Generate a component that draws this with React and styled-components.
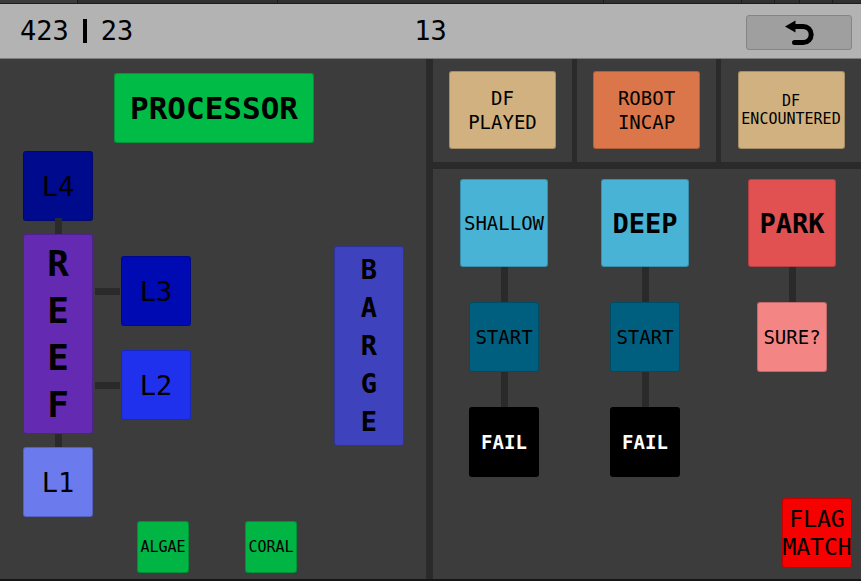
import React from "react";
import styled, { createGlobalStyle } from "styled-components";

const GlobalStyle = createGlobalStyle`
  *, *::before, *::after { box-sizing: border-box; }
  body {
    margin: 0;
    background: #3c3c3c;
    color: #000;
    font-family: "DejaVu Sans Mono", "Liberation Mono", monospace;
  }
`;

const Screen = styled.div`
  display: flex;
  flex-direction: column;
  min-height: 100vh;
  border-bottom: 2px solid #161616;
`;

const TabStrip = styled.div`
  display: grid;
  grid-template-columns: 78fr 200fr 326fr 138fr 33fr 25fr 33fr 28fr;
  height: 4px;
  background: #303030;
  border-bottom: 1px solid #1c1c1c;
`;

const Tab = styled.span`
  background: ${(p) => (p.$active ? "#3c3c3c" : "transparent")};
  border-right: 1px solid #1c1c1c;
`;

const Header = styled.header`
  display: grid;
  grid-template-columns: 1fr auto 1fr;
  align-items: center;
  height: 55px;
  padding: 0 9px;
  background: #b3b3b3;
  border-bottom: 1px solid #7c7c7c;
`;

const HeaderText = styled.div`
  display: flex;
  align-items: center;
  gap: 14px;
  padding-left: ${(p) => (p.$lead ? 11 : 0)}px;
  font-size: 27px;
  line-height: 32px;
`;

const Separator = styled.span`
  width: 4px;
  height: 24px;
  background: #000;
`;

const UndoButton = styled.button`
  display: flex;
  align-items: center;
  justify-content: center;
  justify-self: end;
  width: 106px;
  height: 35px;
  margin-top: 3px;
  padding: 0;
  background: #9f9f9f;
  border: 1px solid #858585;
  border-radius: 3px;
`;

const Main = styled.main`
  display: grid;
  grid-template-columns: 426fr 7px 428fr;
  flex: 1;
`;

const Divider = styled.div`
  background: #2a2a2a;
`;

const Panel = styled.section`
  display: flex;
  flex-direction: column;
  padding-top: 14px;
`;

const sizes = {
  wide: [200, 70],
  tall: [70, 200],
  flag: [107, 78],
  large: [88, 88],
  medium: [70, 70],
  small: [52, 52],
};

const PadButton = styled.button`
  display: flex;
  flex-direction: column;
  align-items: center;
  justify-content: center;
  flex: none;
  width: ${(p) => sizes[p.$size][0]}px;
  height: ${(p) => sizes[p.$size][1]}px;
  padding: 0;
  background: ${(p) => p.$bg};
  color: ${(p) => p.$color || "#000"};
  border: 1px solid rgba(0, 0, 0, 0.2);
  border-radius: 3px;
  font-family: inherit;
  font-size: ${(p) => p.$font}px;
  font-weight: ${(p) => (p.$bold ? 700 : 400)};
  line-height: ${(p) => p.$line || p.$font}px;
  white-space: nowrap;
`;

const Link = styled.div`
  flex: none;
  width: ${(p) => (p.$across ? "25px" : "7px")};
  height: ${(p) => (p.$across ? 7 : p.$length)}px;
  background: #2a2a2a;
`;

const LapLink = styled(Link)`
  margin-top: -3px;
`;

const CenterRow = styled.div`
  display: flex;
  justify-content: center;
  padding-left: 2px;
`;

const Field = styled.div`
  display: flex;
  align-items: center;
  justify-content: space-between;
  margin-top: 8px;
  padding: 0 22px 0 23px;
`;

const Reef = styled.div`
  display: flex;
  align-items: center;
`;

const Stack = styled.div`
  display: flex;
  flex-direction: column;
  align-items: center;
`;

const Branches = styled.div`
  display: flex;
  flex-direction: column;
  gap: 24px;
  padding-top: 8px;
`;

const Branch = styled.div`
  display: flex;
  align-items: center;
  gap: 1px;
  padding-left: 2px;
`;

const BargeSlot = styled.div`
  padding-top: 24px;
`;

const Pieces = styled.div`
  display: flex;
  justify-content: center;
  gap: 56px;
  margin-top: auto;
  padding: 0 0 6px 8px;
`;

const Side = styled.section`
  display: flex;
  flex-direction: column;
`;

const Flags = styled.div`
  display: grid;
  grid-template-columns: 139fr 144fr 145fr;
  height: 110px;
  border-bottom: 7px solid #2a2a2a;
`;

const FlagCell = styled.div`
  display: flex;
  justify-content: center;
  padding-top: 12px;
  border-left: ${(p) => (p.$first ? 0 : 5)}px solid #2a2a2a;
`;

const Endgame = styled.div`
  display: grid;
  grid-template-columns: 142fr 140fr 146fr;
  align-items: start;
  padding-top: 10px;
`;

const ParkStack = styled(Stack)`
  padding-left: 8px;
`;

const Corner = styled.div`
  display: flex;
  justify-content: flex-end;
  margin-top: auto;
  padding: 0 9px 11px 0;
`;

function Pad({ text, size = "medium", bg, font = 27, ...rest }) {
  const lines = Array.isArray(text) ? text : [text];
  return (
    <PadButton type="button" $size={size} $bg={bg} $font={font} {...rest}>
      {lines.map((line, i) => (
        <span key={i}>{line}</span>
      ))}
    </PadButton>
  );
}

function Climb({ text, font, ...rest }) {
  return (
    <Stack>
      <Pad text={text} size="large" bg="#49b3d5" font={font} {...rest} />
      <Link $length={35} />
      <Pad text="START" bg="#005f7f" font={19} />
      <Link $length={35} />
      <Pad text="FAIL" bg="#000" font={19} $bold $color="#fff" />
    </Stack>
  );
}

export default function App() {
  return (
    <>
      <GlobalStyle />
      <Screen>
        <TabStrip>
          <Tab $active />
          <Tab />
          <Tab />
          <Tab />
          <Tab />
          <Tab />
          <Tab />
        </TabStrip>
        <Header>
          <HeaderText $lead>
            <span>423</span>
            <Separator />
            <span>23</span>
          </HeaderText>
          <HeaderText>13</HeaderText>
          <UndoButton type="button" aria-label="Undo">
            <svg width="30" height="26" viewBox="0 0 30 26" fill="none">
              <path
                d="M9 6.5H19.2A8 8 0 0 1 19.2 22.5H10.5"
                stroke="#000"
                strokeWidth="5"
                strokeLinecap="round"
              />
              <path d="M1 6.5L11.5 0.5V12.5Z" fill="#000" />
            </svg>
          </UndoButton>
        </Header>
        <Main>
          <Panel>
            <CenterRow>
              <Pad text="PROCESSOR" size="wide" bg="#00bb45" font={31} $bold />
            </CenterRow>
            <Field>
              <Reef>
                <Stack>
                  <Pad text="L4" bg="#000a8c" />
                  <LapLink $length={16} />
                  <Pad
                    text={["R", "E", "E", "F"]}
                    aria-label="REEF"
                    size="tall"
                    bg="#642ab2"
                    font={36}
                    $line={47}
                    $bold
                  />
                  <Link $length={13} />
                  <Pad text="L1" bg="#6b7bed" />
                </Stack>
                <Branches>
                  <Branch>
                    <Link $across />
                    <Pad text="L3" bg="#000ab2" />
                  </Branch>
                  <Branch>
                    <Link $across />
                    <Pad text="L2" bg="#1f31ed" />
                  </Branch>
                </Branches>
              </Reef>
              <BargeSlot>
                <Pad
                  text={["B", "A", "R", "G", "E"]}
                  aria-label="BARGE"
                  size="tall"
                  bg="#3e42bd"
                  font={27}
                  $line={38}
                  $bold
                />
              </BargeSlot>
            </Field>
            <Pieces>
              <Pad text="ALGAE" size="small" bg="#00b544" font={15} />
              <Pad text="CORAL" size="small" bg="#00b544" font={15} />
            </Pieces>
          </Panel>
          <Divider />
          <Side>
            <Flags>
              <FlagCell $first>
                <Pad text={["DF", "PLAYED"]} size="flag" bg="#d1b17f" font={19} $line={24} />
              </FlagCell>
              <FlagCell>
                <Pad text={["ROBOT", "INCAP"]} size="flag" bg="#db764a" font={19} $line={24} />
              </FlagCell>
              <FlagCell>
                <Pad text={["DF", "ENCOUNTERED"]} size="flag" bg="#d1b17f" font={15} $line={18} />
              </FlagCell>
            </Flags>
            <Endgame>
              <Climb text="SHALLOW" font={19} />
              <Climb text="DEEP" font={27} $bold />
              <ParkStack>
                <Pad text="PARK" size="large" bg="#e25151" $bold />
                <Link $length={35} />
                <Pad text="SURE?" bg="#f48585" font={19} />
              </ParkStack>
            </Endgame>
            <Corner>
              <Pad text={["FLAG", "MATCH"]} bg="#f60000" font={23} $line={28} />
            </Corner>
          </Side>
        </Main>
      </Screen>
    </>
  );
}
